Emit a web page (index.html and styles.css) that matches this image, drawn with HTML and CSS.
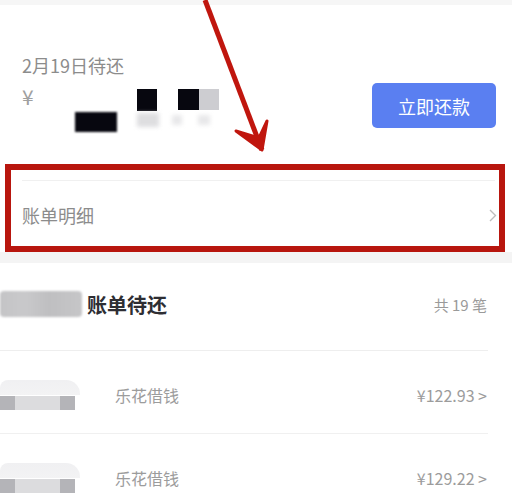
FILE: index.html
```html
<!DOCTYPE html>
<html lang="zh">
<head>
<meta charset="utf-8">
<link rel="stylesheet" href="styles.css">
</head>
<body>
<div class="page">
  <div class="topstrip"></div>
  <section class="summary">
    <div class="due">
      <div class="due-label">2月19日待还</div>
      <div class="amount">
        <span class="yen">¥</span>
        <span class="mask m1"></span>
        <span class="mask m2"></span>
        <span class="mask m3"></span>
        <span class="mask m4"></span>
        <span class="ghost g1"></span>
        <span class="ghost g2"></span>
        <span class="ghost g3"></span>
      </div>
    </div>
    <button class="pay-btn">立即还款</button>
  </section>

  <section class="detail">
    <div class="detail-line"></div>
    <div class="detail-row">
      <span class="detail-text">账单明细</span>
      <svg class="chev" width="8" height="13" viewBox="0 0 8 13"><path d="M1 1 L6.5 6.5 L1 12" fill="none" stroke="#bdbdbd" stroke-width="1.4"/></svg>
    </div>
    <div class="redbox"></div>
  </section>

  <div class="band"></div>

  <section class="bills">
    <div class="bills-head">
      <div class="head-left">
        <span class="blur-name"></span>
        <span class="head-title">账单待还</span>
      </div>
      <span class="head-count">共 19 笔</span>
    </div>
    <div class="bill-row">
      <span class="blur-date"><i class="d"></i><i></i><i></i><i></i><i class="d"></i></span>
      <span class="bill-name">乐花借钱</span>
      <span class="bill-amt">¥122.93 &gt;</span>
    </div>
    <div class="bill-row">
      <span class="blur-date"><i class="d"></i><i></i><i></i><i></i><i class="d"></i></span>
      <span class="bill-name">乐花借钱</span>
      <span class="bill-amt">¥129.22 &gt;</span>
    </div>
  </section>

  <svg class="arrow" width="80" height="160" viewBox="0 0 80 160">
    <path d="M15 0 L72 150" stroke="#c0160e" stroke-width="5" fill="none"/>
    <path d="M46 131 L72 150 L77 121 L69 138 Z" fill="#c0160e" stroke="#c0160e" stroke-width="3" stroke-linejoin="round"/>
  </svg>
</div>
</body>
</html>
```

FILE: styles.css
```css
html, body {
  margin: 0;
  padding: 0;
  background: #ffffff;
}
body {
  font-family: "Noto Sans CJK SC", "Noto Sans", sans-serif;
  width: 512px;
  height: 502px;
  overflow: hidden;
}
.page {
  position: relative;
  width: 512px;
  height: 502px;
  overflow: hidden;
}
.topstrip {
  height: 5px;
  background: #f6f6f6;
}
.summary {
  height: 159px;
  box-sizing: border-box;
  padding: 48px 16px 0 22px;
  display: flex;
  justify-content: space-between;
  align-items: flex-start;
}
.due-label {
  font-size: 18px;
  line-height: 24px;
  color: #8c8c8c;
}
.amount {
  position: relative;
  width: 220px;
  height: 58px;
}
.yen {
  position: absolute;
  left: 0;
  top: 7px;
  font-size: 21px;
  line-height: 24px;
  color: #a0a0a0;
}
.mask {
  position: absolute;
  background: #07070f;
}
.m1 { left: 53px; top: 35px; width: 42px; height: 20px; filter: blur(0.8px); }
.m2 { left: 115px; top: 12px; width: 20px; height: 22px; }
.m3 { left: 156px; top: 12px; width: 21px; height: 21px; }
.m4 { left: 177px; top: 12px; width: 20px; height: 21px; background: #cdcdd1; }
.ghost {
  position: absolute;
  background: #e8e8ea;
  filter: blur(2px);
}
.g1 { left: 115px; top: 36px; width: 22px; height: 14px; background: #dedee0; }
.g2 { left: 150px; top: 38px; width: 10px; height: 10px; }
.g3 { left: 176px; top: 38px; width: 12px; height: 10px; }
.pay-btn {
  margin-top: 30px;
  width: 124px;
  height: 45px;
  border: none;
  border-radius: 5px;
  background: #5a7ff1;
  color: #ffffff;
  font-family: inherit;
  font-size: 18px;
  padding: 0;
}
.detail {
  position: relative;
  height: 88px;
}
.detail-line {
  position: absolute;
  left: 22px;
  right: 17px;
  top: 16px;
  height: 1px;
  background: #f0f0f0;
}
.detail-row {
  height: 88px;
  box-sizing: border-box;
  padding: 14px 15px 0 22px;
  display: flex;
  align-items: center;
  justify-content: space-between;
}
.detail-text {
  font-size: 18px;
  color: #8c8c8c;
}
.chev {
  display: block;
}
.redbox {
  position: absolute;
  left: 5px;
  right: 7px;
  top: 0;
  bottom: 0;
  border: 6px solid #b8160e;
}
.band {
  height: 11px;
  background: #f4f4f4;
}
.bills-head {
  height: 88px;
  box-sizing: border-box;
  padding: 0 1px 5px 0;
  display: flex;
  align-items: center;
  justify-content: space-between;
  border-bottom: 1px solid #eeeeee;
  margin-right: 24px;
}
.head-left {
  display: flex;
  align-items: center;
}
.blur-name {
  display: block;
  width: 82px;
  height: 26px;
  margin-right: 5px;
  background: linear-gradient(90deg, #c4c4c6 0, #c9c9cb 30%, #bfbfc1 60%, #c6c6c8 100%);
  filter: blur(1px);
  border-radius: 4px;
}
.head-title {
  font-size: 20px;
  font-weight: 700;
  color: #2e2e33;
}
.head-count {
  font-size: 15px;
  color: #9a9a9a;
}
.bill-row {
  height: 83px;
  box-sizing: border-box;
  margin-right: 24px;
  display: flex;
  align-items: center;
  border-bottom: 1px solid #f0f0f0;
  padding-top: 5px;
}
.blur-date {
  display: flex;
  align-items: flex-end;
  width: 80px;
  height: 30px;
  margin-right: 35px;
  background: linear-gradient(180deg, #f0f0f2 0, #f3f3f4 50%, transparent 50%);
  border-radius: 8px 14px 8px 8px;
}
.blur-date i {
  display: block;
  width: 15px;
  height: 14px;
  background: #dcdcde;
}
.blur-date i.d {
  background: #b4b4b8;
}
.bill-name {
  font-size: 16px;
  color: #9c9c9c;
  flex: 1;
}
.bill-amt {
  font-size: 16px;
  color: #9c9c9c;
  margin-right: 1px;
}
.arrow {
  position: absolute;
  left: 190px;
  top: 0;
}
```
